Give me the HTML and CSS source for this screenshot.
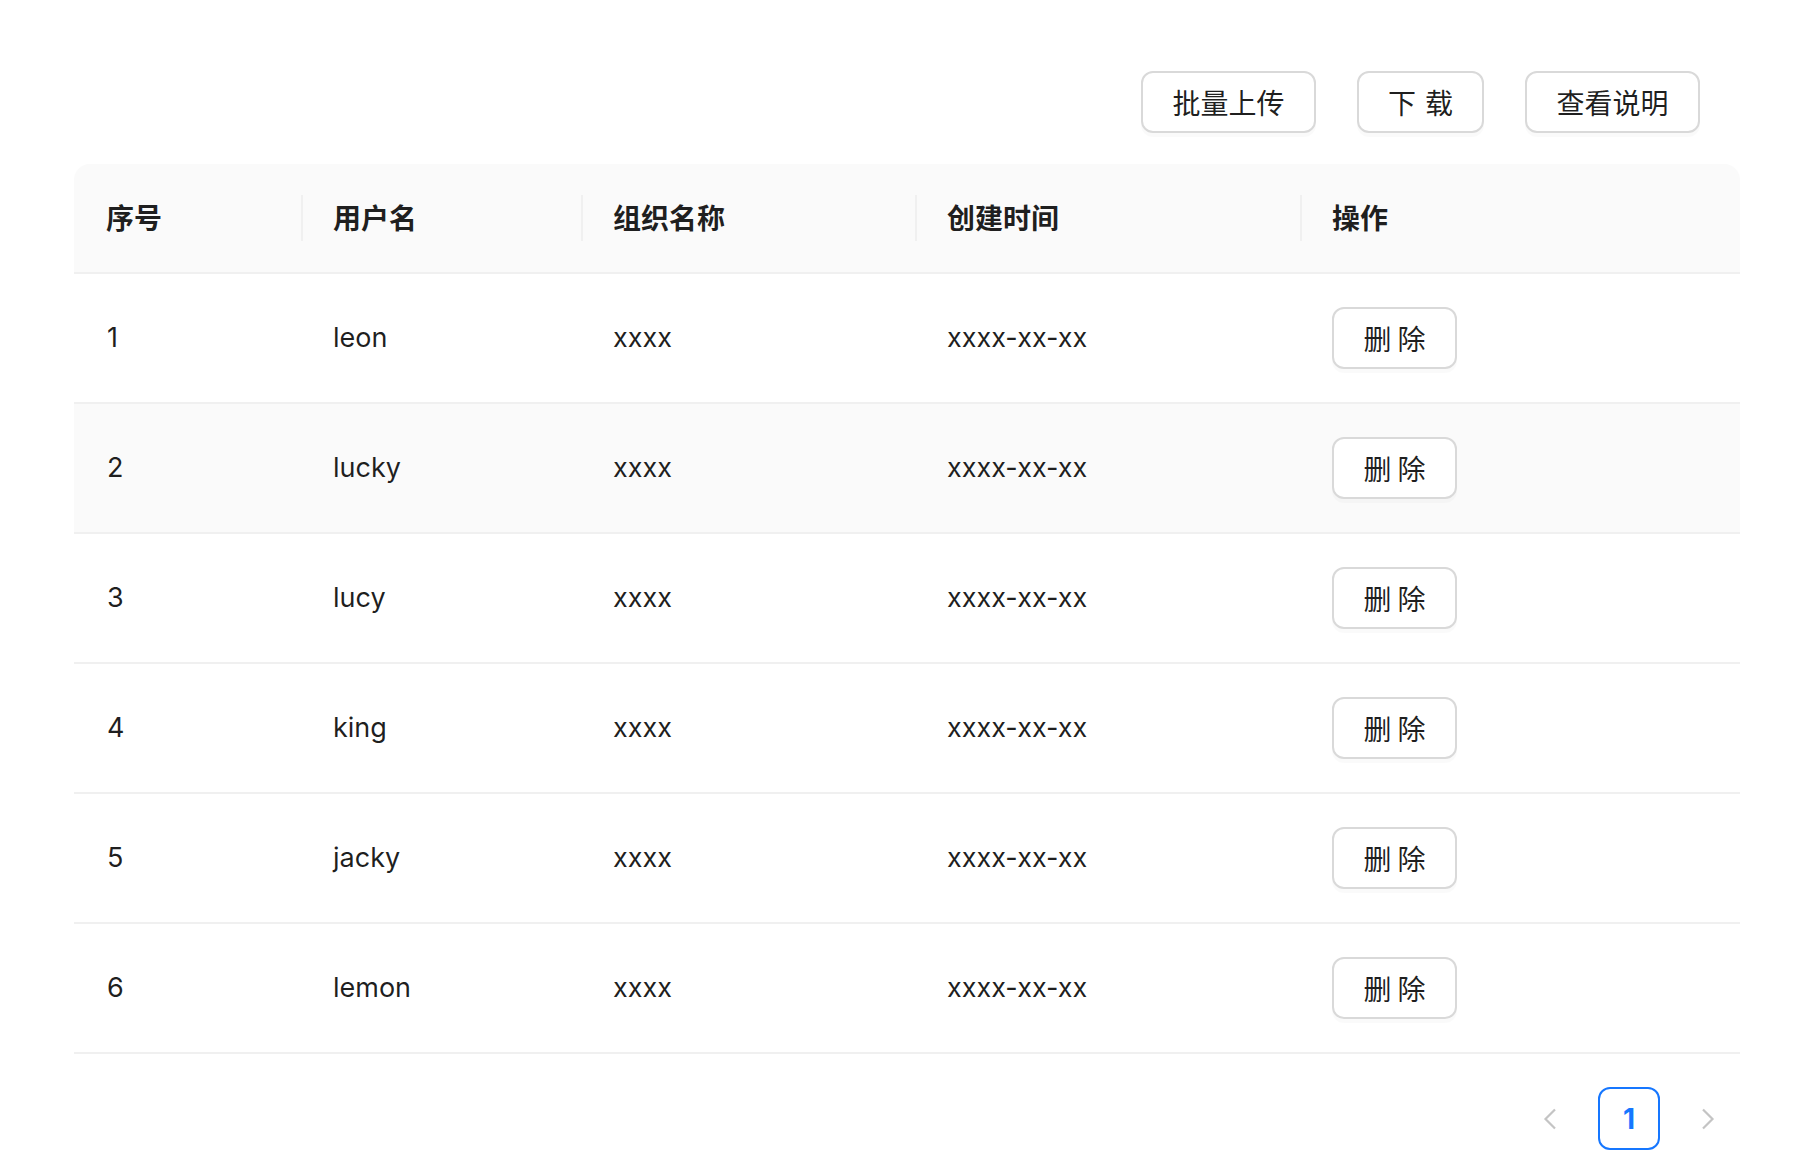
FILE: index.html
```html
<!DOCTYPE html>
<html lang="zh-CN">
<head>
<meta charset="utf-8">
<title>用户列表</title>
<link rel="stylesheet" href="styles.css">
</head>
<body>
<div class="page">
  <div class="toolbar">
    <button class="btn btn-wide">批量上传</button>
    <button class="btn btn-mid"><span class="two">下</span>载</button>
    <button class="btn btn-wide">查看说明</button>
  </div>

  <table class="table">
    <colgroup>
      <col class="c1"><col class="c2"><col class="c3"><col class="c4"><col class="c5">
    </colgroup>
    <thead>
      <tr>
        <th><span class="th-text">序号</span></th>
        <th class="div"><span class="th-text">用户名</span></th>
        <th class="div"><span class="th-text">组织名称</span></th>
        <th class="div"><span class="th-text">创建时间</span></th>
        <th class="div"><span class="th-text">操作</span></th>
      </tr>
    </thead>
    <tbody>
      <tr><td>1</td><td>leon</td><td>xxxx</td><td>xxxx-xx-xx</td><td><button class="btn btn-sm"><span class="two2">删</span>除</button></td></tr>
      <tr class="hover"><td>2</td><td>lucky</td><td>xxxx</td><td>xxxx-xx-xx</td><td><button class="btn btn-sm"><span class="two2">删</span>除</button></td></tr>
      <tr><td>3</td><td>lucy</td><td>xxxx</td><td>xxxx-xx-xx</td><td><button class="btn btn-sm"><span class="two2">删</span>除</button></td></tr>
      <tr><td>4</td><td>king</td><td>xxxx</td><td>xxxx-xx-xx</td><td><button class="btn btn-sm"><span class="two2">删</span>除</button></td></tr>
      <tr><td>5</td><td>jacky</td><td>xxxx</td><td>xxxx-xx-xx</td><td><button class="btn btn-sm"><span class="two2">删</span>除</button></td></tr>
      <tr><td>6</td><td>lemon</td><td>xxxx</td><td>xxxx-xx-xx</td><td><button class="btn btn-sm"><span class="two2">删</span>除</button></td></tr>
    </tbody>
  </table>

  <div class="pagination">
    <span class="pg-arrow">
      <svg width="14" height="22" viewBox="0 0 14 22"><path d="M12 1.5 L2.5 11 L12 20.5" fill="none" stroke="#c4c4c4" stroke-width="2.2" stroke-linejoin="miter"/></svg>
    </span>
    <span class="pg-item">1</span>
    <span class="pg-arrow">
      <svg width="14" height="22" viewBox="0 0 14 22"><path d="M2 1.5 L11.5 11 L2 20.5" fill="none" stroke="#c4c4c4" stroke-width="2.2" stroke-linejoin="miter"/></svg>
    </span>
  </div>
</div>
</body>
</html>
```

FILE: styles.css
```css
html, body {
  margin: 0;
  padding: 0;
  background: #ffffff;
}

body {
  font-family: Inter, "Noto Sans CJK SC", "Liberation Sans", sans-serif;
  font-size: 28px;
  color: rgba(0, 0, 0, 0.88);
}

.page {
  padding: 71px 76px 0 74px;
}

.toolbar {
  display: flex;
  justify-content: flex-end;
  gap: 41px;
  padding-right: 40px;
  margin-bottom: 31px;
}

.btn {
  box-sizing: border-box;
  font-family: "Noto Sans CJK SC", "Liberation Sans", sans-serif;
  font-size: 28px;
  color: rgba(0, 0, 0, 0.88);
  background: #ffffff;
  border: 2px solid #d9d9d9;
  border-radius: 12px;
  height: 62px;
  padding: 0;
  line-height: 1;
  box-shadow: 0 4px 0 rgba(0, 0, 0, 0.02);
  display: inline-flex;
  align-items: center;
  justify-content: center;
  cursor: pointer;
}

.btn-wide {
  width: 175px;
}

.btn-mid {
  width: 127px;
}

.two {
  margin-right: 9px;
}

.two2 {
  margin-right: 6px;
}

.btn-sm {
  width: 125px;
}

.table {
  width: 100%;
  border-collapse: separate;
  border-spacing: 0;
  table-layout: fixed;
}

.c1 { width: 227px; }
.c2 { width: 280px; }
.c3 { width: 334px; }
.c4 { width: 385px; }

.table th {
  background: #fafafa;
  font-family: "Noto Sans CJK SC", "Liberation Sans", sans-serif;
  font-weight: 700;
  font-size: 28px;
  text-align: left;
  padding: 32px 32px;
  height: 44px;
  line-height: 44px;
  border-bottom: 2px solid #f0f0f0;
  position: relative;
  color: rgba(0, 0, 0, 0.88);
}

.table th:first-child {
  border-top-left-radius: 16px;
}

.table th:last-child {
  border-top-right-radius: 16px;
}

.table th.div::before {
  content: "";
  position: absolute;
  left: 0;
  top: 50%;
  width: 2px;
  height: 46px;
  transform: translateY(-50%);
  background: #f0f0f0;
}

.th-text {
  display: inline-block;
  transform: translateY(-1px);
}

.table td {
  padding: 32px 32px;
  height: 64px;
  line-height: 40px;
  vertical-align: middle;
  border-bottom: 2px solid #f0f0f0;
  font-size: 27px;
  white-space: nowrap;
}

.table td:first-child {
  padding-left: 33px;
}

.table tr.hover td {
  background: #fafafa;
}

.pagination {
  display: flex;
  justify-content: flex-end;
  align-items: center;
  gap: 16px;
  margin-top: 33px;
}

.pg-arrow {
  width: 64px;
  height: 63px;
  display: flex;
  align-items: center;
  justify-content: center;
}

.pg-item {
  width: 58px;
  height: 59px;
  border: 2px solid #1677ff;
  border-radius: 12px;
  display: flex;
  align-items: center;
  justify-content: center;
  color: #1677ff;
  font-weight: 700;
  font-size: 28px;
  font-family: Inter, "Liberation Sans", Arial, sans-serif;
}
```
